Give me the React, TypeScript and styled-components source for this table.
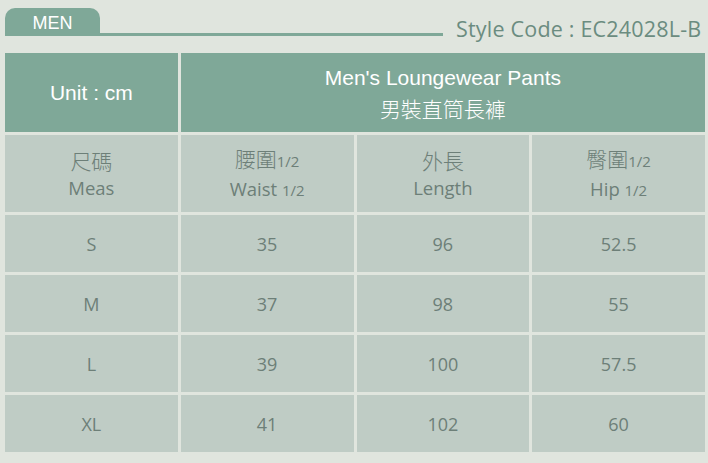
import React from "react";
import styled, { createGlobalStyle } from "styled-components";

const GlobalStyle = createGlobalStyle`
  html, body {
    margin: 0;
    padding: 0;
    background: #e0e5de;
  }
`;

type Row = { size: string; waist: string; length: string; hip: string };

const rows: Row[] = [
  { size: "S", waist: "35", length: "96", hip: "52.5" },
  { size: "M", waist: "37", length: "98", hip: "55" },
  { size: "L", waist: "39", length: "100", hip: "57.5" },
  { size: "XL", waist: "41", length: "102", hip: "60" },
];

export default function App() {
  return (
    <>
      <GlobalStyle />
      <Page>
        <TopBar>
          <Tab>MEN</Tab>
          <TabLine />
          <StyleCode>Style Code : EC24028L-B</StyleCode>
        </TopBar>
        <Table>
          <HeadCell>Unit : cm</HeadCell>
          <HeadCell $span={3}>
            <span>Men's Loungewear Pants</span>
            <Cjk>男裝直筒長褲</Cjk>
          </HeadCell>

          <LabelCell>
            <Zh>尺碼</Zh>
            <En>Meas</En>
          </LabelCell>
          <LabelCell>
            <Zh>
              腰圍<Half>1/2</Half>
            </Zh>
            <En>
              Waist <Half>1/2</Half>
            </En>
          </LabelCell>
          <LabelCell>
            <Zh>外長</Zh>
            <En>Length</En>
          </LabelCell>
          <LabelCell>
            <Zh>
              臀圍<Half>1/2</Half>
            </Zh>
            <En>
              Hip <Half>1/2</Half>
            </En>
          </LabelCell>

          {rows.map((r) => (
            <React.Fragment key={r.size}>
              <DataCell>{r.size}</DataCell>
              <DataCell>{r.waist}</DataCell>
              <DataCell>{r.length}</DataCell>
              <DataCell>{r.hip}</DataCell>
            </React.Fragment>
          ))}
        </Table>
      </Page>
    </>
  );
}

const Page = styled.div`
  width: 700px;
  padding: 8px 3px 0 5px;
`;

const TopBar = styled.div`
  display: flex;
  align-items: flex-end;
  height: 28px;
  margin-bottom: 17px;
`;

const Tab = styled.div`
  width: 95px;
  height: 28px;
  box-sizing: border-box;
  padding-top: 3px;
  background: #7fa898;
  border-radius: 10px 10px 0 0;
  color: #ffffff;
  font-family: "Liberation Sans", Arial, sans-serif;
  font-size: 18px;
  text-align: center;
  line-height: 24px;
`;

const TabLine = styled.div`
  width: 343px;
  height: 3px;
  background: #7fa898;
`;

const StyleCode = styled.div`
  margin-left: 13px;
  margin-bottom: -7px;
  color: #6b8c80;
  font-family: "Open Sans", "Noto Sans", sans-serif;
  font-size: 21.5px;
  letter-spacing: 0.2px;
  white-space: nowrap;
`;

const Table = styled.div`
  display: grid;
  grid-template-columns: repeat(4, 1fr);
  grid-template-rows: 79px 77px repeat(4, 57px);
  gap: 3px;
`;

const HeadCell = styled.div<{ $span?: number }>`
  grid-column: span ${(p) => p.$span ?? 1};
  background: #7fa898;
  color: #ffffff;
  display: flex;
  flex-direction: column;
  align-items: center;
  justify-content: center;
  font-family: "Liberation Sans", Arial, "Noto Sans CJK TC", sans-serif;
  font-size: 21px;
  line-height: 31px;
`;

const Cjk = styled.span`
  font-family: "Noto Sans CJK TC", sans-serif;
  font-size: 21px;
  font-weight: 300;
`;

const LabelCell = styled.div`
  background: #bfccc5;
  color: #6d7f78;
  display: flex;
  flex-direction: column;
  align-items: center;
  justify-content: center;
`;

const Zh = styled.div`
  font-family: "Noto Sans CJK TC", sans-serif;
  font-size: 21px;
  font-weight: 300;
  line-height: 28px;
`;

const En = styled.div`
  font-family: "Open Sans", "Noto Sans", sans-serif;
  font-size: 18.5px;
  line-height: 28px;
`;

const Half = styled.span`
  font-family: "Open Sans", "Noto Sans", sans-serif;
  font-size: 15px;
  font-weight: 400;
`;

const DataCell = styled.div`
  background: #bfccc5;
  color: #6d7f78;
  display: flex;
  align-items: center;
  justify-content: center;
  font-family: "Open Sans", "Noto Sans", sans-serif;
  font-size: 18px;
`;
